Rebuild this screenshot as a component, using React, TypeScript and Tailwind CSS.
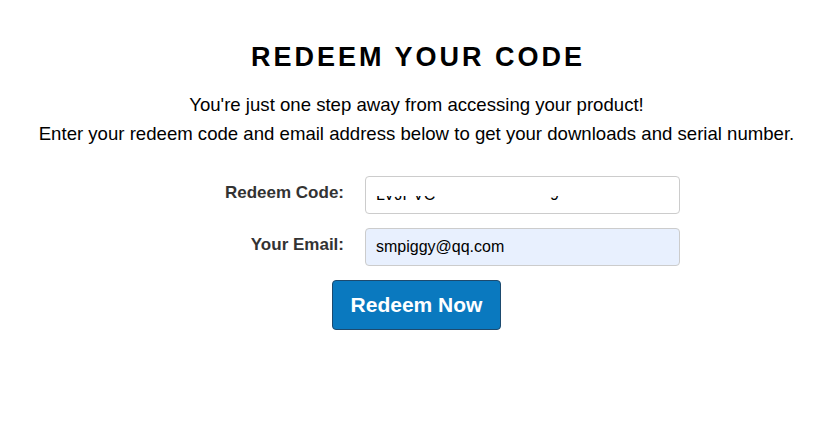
import { FC } from "react";

const Field: FC<{ label: string; children: React.ReactNode }> = ({ label, children }) => (
  <div className="flex items-center gap-[21px]">
    <label className="w-[191px] text-right text-[17px] font-bold text-[#333333] -mt-[4px]">
      {label}
    </label>
    {children}
  </div>
);

const App = () => {
  return (
    <div
      className="w-[833px] h-[424px] bg-white flex flex-col items-center pt-[39px]"
      style={{ fontFamily: '"Liberation Sans", Arial, sans-serif' }}
    >
      <h1 className="text-[27px] font-bold tracking-[3px] text-black leading-[36px] pl-[3px]">
        REDEEM YOUR CODE
      </h1>
      <div className="mt-[15px] text-center text-[18.6px] leading-[29px] text-black">
        <p>You're just one step away from accessing your product!</p>
        <p>Enter your redeem code and email address below to get your downloads and serial number.</p>
      </div>

      <form className="mt-[28px] flex flex-col items-center gap-[14px]">
        <div className="flex flex-col gap-[14px]">
          <Field label="Redeem Code:">
            {/* code is blanked out in the screenshot, only the bottoms of a few glyphs show */}
            <div className="relative w-[315px] h-[38px]">
              <input
                readOnly
                value="LVJPVC"
                className="w-full h-full rounded-[4px] border border-[#cccccc] bg-white px-[10px] text-[16px] text-black outline-none"
              />
              <span className="absolute left-[185px] top-[10px] text-[16px] leading-[18px] text-black">9</span>
              <div className="absolute left-[1px] right-[1px] top-[4px] h-[16px] bg-white" />
              <div className="absolute left-[76px] right-[134px] top-[4px] h-[28px] bg-white" />
            </div>
          </Field>
          <Field label="Your Email:">
            <input
              readOnly
              value="smpiggy@qq.com"
              className="w-[315px] h-[38px] rounded-[4px] border border-[#cccccc] bg-[#e8f0fe] px-[10px] text-[16px] text-black outline-none"
            />
          </Field>
        </div>
        <button
          type="button"
          className="w-[169px] h-[50px] rounded-[4px] border border-[#1d4a6e] bg-[#0a79bf] text-[21px] font-bold text-white"
        >
          Redeem Now
        </button>
      </form>
    </div>
  );
};

export default App;
